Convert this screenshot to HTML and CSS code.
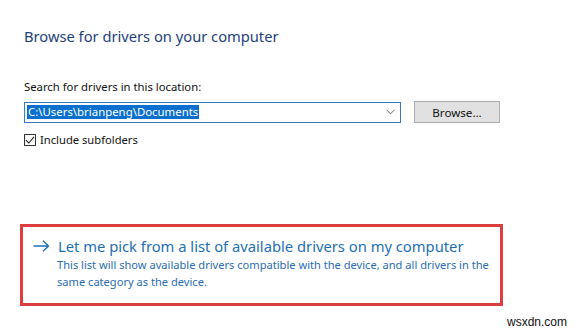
FILE: index.html
```html
<!DOCTYPE html>
<html lang="en">
<head>
  <meta charset="UTF-8" />
  <title>Browse for drivers on your computer</title>
  <link rel="stylesheet" href="styles.css">
</head>
<body>
  <div class="page">
    <h1 class="title">Browse for drivers on your computer</h1>

    <p class="label">Search for drivers in this location:</p>
    <div class="path-row">
      <div class="combo">
        <span class="path-text">C:\Users\brianpeng\Documents</span>
        <svg class="chevron" width="9" height="6" viewBox="0 0 9 6">
          <path d="M0.5 0.8 L4.5 4.8 L8.5 0.8" fill="none" stroke="#6d6d6d" stroke-width="1"/>
        </svg>
      </div>
      <button class="browse-btn">Browse...</button>
    </div>

    <label class="check-row">
      <span class="checkbox">
        <svg width="10" height="10" viewBox="0 0 10 10">
          <path d="M1 5.2 L3.8 8 L9 1.8" fill="none" stroke="#222" stroke-width="1.1"/>
        </svg>
      </span>
      Include subfolders
    </label>

    <div class="pick-box">
      <div class="pick-head">
        <svg class="arrow" width="17" height="12" viewBox="0 0 17 12">
          <path d="M0.5 6 H15.5 M10 0.8 L15.5 6 L10 11.2" fill="none" stroke="#1d6fb5" stroke-width="1.4"/>
        </svg>
        <span class="pick-title">Let me pick from a list of available drivers on my computer</span>
      </div>
      <p class="pick-desc">This list will show available drivers compatible with the device, and all drivers in the same category as the device.</p>
    </div>

    <div class="watermark">wsxdn.com</div>
  </div>
</body>
</html>
```

FILE: styles.css
```css
body {
  margin: 0;
  background: #fff;
  font-family: "Noto Sans", "Open Sans", sans-serif;
  color: #000;
}

.page {
  width: 580px;
  height: 329px;
  padding: 0 0 0 24px;
  box-sizing: border-box;
  overflow: hidden;
}

.title {
  margin: 0;
  padding-top: 25px;
  font-size: 14.7px;
  font-weight: normal;
  line-height: 22px;
  color: #1e3f7c;
}

.label {
  margin: 32px 0 0 0;
  font-size: 11.3px;
  line-height: 16px;
  color: #111;
}

.path-row {
  display: flex;
  align-items: center;
  margin-top: 6px;
}

.combo {
  width: 377px;
  height: 21px;
  border: 1px solid #3a7bbf;
  box-sizing: border-box;
  display: flex;
  align-items: center;
  padding-left: 2px;
  padding-right: 4px;
}

.path-text {
  background: #0a6fcf;
  color: #fff;
  font-size: 11.4px;
  line-height: 14px;
  height: 14px;
  padding: 0 1px;
}

.chevron {
  margin-left: auto;
  margin-right: 1px;
}

.browse-btn {
  margin-left: 13px;
  width: 86px;
  height: 22px;
  background: #e1e1e1;
  border: 1px solid #adadad;
  font-family: inherit;
  font-size: 11.6px;
  color: #111;
  padding: 0;
}

.check-row {
  display: flex;
  align-items: center;
  margin-top: 10px;
  font-size: 11.2px;
  line-height: 14px;
  color: #111;
}

.checkbox {
  width: 12px;
  height: 12px;
  border: 1px solid #333;
  box-sizing: border-box;
  display: flex;
  align-items: center;
  justify-content: center;
  margin-right: 4px;
}

.pick-box {
  margin: 77px 0 0 -4px;
  width: 483px;
  height: 82px;
  box-sizing: border-box;
  border: 3px solid #dc3d3f;
  padding: 9px 2px 0 10px;
}

.pick-head {
  display: flex;
  align-items: center;
}

.arrow {
  margin-right: 8px;
}

.pick-title {
  font-size: 14.75px;
  line-height: 20px;
  color: #1d6fb5;
}

.pick-desc {
  margin: 0 0 0 24px;
  font-size: 11.1px;
  line-height: 17px;
  color: #2a6db3;
}

.watermark {
  margin: 9px 0 0 483px;
  font-family: "Liberation Sans", Arial, sans-serif;
  font-size: 12px;
  line-height: 14px;
  color: #111;
}
```
